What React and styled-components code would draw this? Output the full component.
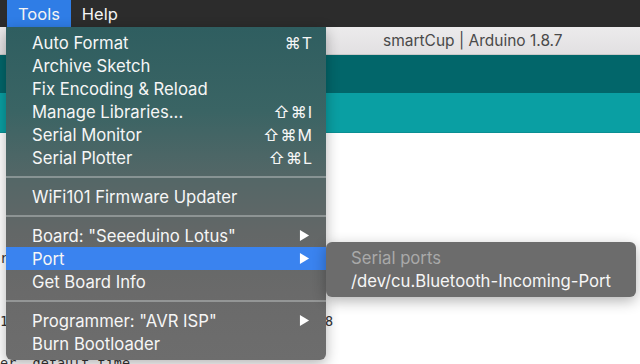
import React from 'react'
import styled, { createGlobalStyle } from 'styled-components'

const GlobalStyle = createGlobalStyle`
  html, body {
    margin: 0;
    padding: 0;
    background: #fff;
    overflow: hidden;
  }
`

const uiFont = `'Inter', 'Noto Sans', 'DejaVu Sans', sans-serif`

const toolsMenu = [
  { label: 'Auto Format', shortcut: '⌘T' },
  { label: 'Archive Sketch' },
  { label: 'Fix Encoding & Reload' },
  { label: 'Manage Libraries...', shortcut: '⇧⌘I' },
  { label: 'Serial Monitor', shortcut: '⇧⌘M' },
  { label: 'Serial Plotter', shortcut: '⇧⌘L' },
  { separator: true },
  { label: 'WiFi101 Firmware Updater' },
  { separator: true },
  { label: 'Board: "Seeeduino Lotus"', submenu: true },
  { label: 'Port', submenu: true, active: true },
  { label: 'Get Board Info' },
  { separator: true },
  { label: 'Programmer: "AVR ISP"', submenu: true },
  { label: 'Burn Bootloader' },
]

// only the edges of the sketch peek out from under the menus;
// each line is a list of [column, text] pieces
const code = [
  [],
  [],
  [],
  [],
  [],
  [[0, 'r']],
  [],
  [],
  [[0, '1'], [40, '8']],
  [],
  [[0, 'er  default time']],
]

const App = () => (
  <>
    <GlobalStyle />
    <Screen>
      <MenuBar>
        <MenuTitle active>Tools</MenuTitle>
        <MenuTitle>Help</MenuTitle>
      </MenuBar>

      <Window>
        <TitleBar>smartCup | Arduino 1.8.7</TitleBar>
        <Toolbar />
        <TabBar />
        <Editor>
          {code.map((pieces, i) => (
            <CodeLine key={i}>
              {pieces.map(([col, text], j) => (
                <Token key={j} col={col}>{text}</Token>
              ))}
            </CodeLine>
          ))}
        </Editor>
      </Window>

      <Dropdown>
        {toolsMenu.map((item, i) =>
          item.separator ? (
            <Separator key={i} />
          ) : (
            <Item key={i} active={item.active}>
              <span>{item.label}</span>
              {item.shortcut && <Shortcut>{item.shortcut}</Shortcut>}
              {item.submenu && (
                <Arrow viewBox="0 0 12 14">
                  <path d="M1 1 L11 7 L1 13 Z" fill="#fff" />
                </Arrow>
              )}
              {item.active && (
                <Submenu>
                  <SubItem disabled>Serial ports</SubItem>
                  <SubItem>/dev/cu.Bluetooth-Incoming-Port</SubItem>
                </Submenu>
              )}
            </Item>
          )
        )}
      </Dropdown>
    </Screen>
  </>
)

// styles ===========
const Screen = styled.div`
  position: relative;
  width: 640px;
  height: 364px;
  overflow: hidden;
  font-family: ${uiFont};
`

const MenuBar = styled.div`
  height: 27px;
  background: #2c2c2c;
  display: flex;
  align-items: stretch;
  padding-left: 7px;
`

const MenuTitle = styled.div`
  display: flex;
  align-items: center;
  padding: 0 11px;
  font-size: 16.5px;
  color: #f4f4f4;
  background: ${p => (p.active ? '#2f7de6' : 'transparent')};
`

const Window = styled.div`
  display: flex;
  flex-direction: column;
`

const TitleBar = styled.div`
  height: 28px;
  display: flex;
  align-items: center;
  padding-left: 383px;
  background: linear-gradient(#ecebec, #e2e0e2);
  border-bottom: 1px solid #c9c9c9;
  box-sizing: border-box;
  color: #4a4a4a;
  font-size: 15.5px;
`

const Toolbar = styled.div`
  height: 38px;
  background: #02666a;
`

const TabBar = styled.div`
  height: 39px;
  background: #0a9fa3;
  border-bottom: 1px solid #0a8f93;
`

const Editor = styled.div`
  padding-top: 10px;
  background: #fff;
`

const CodeLine = styled.div`
  position: relative;
  height: 21px;
  line-height: 21px;
  white-space: pre;
  font-family: 'DejaVu Sans Mono', monospace;
  font-size: 13.5px;
  color: #333;
`

const Token = styled.span`
  position: absolute;
  left: ${p => p.col}ch;
`

const Dropdown = styled.div`
  position: absolute;
  top: 27px;
  left: 6px;
  width: 320px;
  padding: 4px 0 5px;
  border-radius: 0 0 6px 6px;
  background: linear-gradient(
    #2f5e60 0%,
    #3a6464 25%,
    #546767 45%,
    #636767 62%,
    #6a6a6a 80%,
    #6d6d6d 100%
  );
  box-shadow: 0 4px 14px rgba(0, 0, 0, 0.3);
  box-sizing: border-box;
`

const Item = styled.div`
  position: relative;
  height: 23px;
  display: flex;
  align-items: center;
  justify-content: space-between;
  padding: 0 13px 0 26px;
  font-size: 16.7px;
  color: #f6f6f6;
  background: ${p => (p.active ? '#3a83ef' : 'transparent')};
`

const Shortcut = styled.span`
  font-family: 'Inter', 'DejaVu Sans', sans-serif;
  font-size: 16px;
  letter-spacing: 1px;
`

const Arrow = styled.svg`
  width: 11px;
  height: 13px;
  margin-right: 3px;
`

const Separator = styled.div`
  height: 16px;
  display: flex;
  align-items: center;

  &::after {
    content: '';
    flex: 1;
    height: 2px;
    background: rgba(200, 205, 205, 0.45);
  }
`

const Submenu = styled.div`
  position: absolute;
  left: 100%;
  top: -5px;
  width: 310px;
  padding: 4px 0 5px;
  border-radius: 6px;
  background: #6c6c6c;
  box-shadow: 0 4px 14px rgba(0, 0, 0, 0.3);
  box-sizing: border-box;
`

const SubItem = styled.div`
  height: 23px;
  display: flex;
  align-items: center;
  padding-left: 25px;
  font-size: 16.7px;
  color: ${p => (p.disabled ? '#a9a9a9' : '#f6f6f6')};
`

// ==================
export default App
